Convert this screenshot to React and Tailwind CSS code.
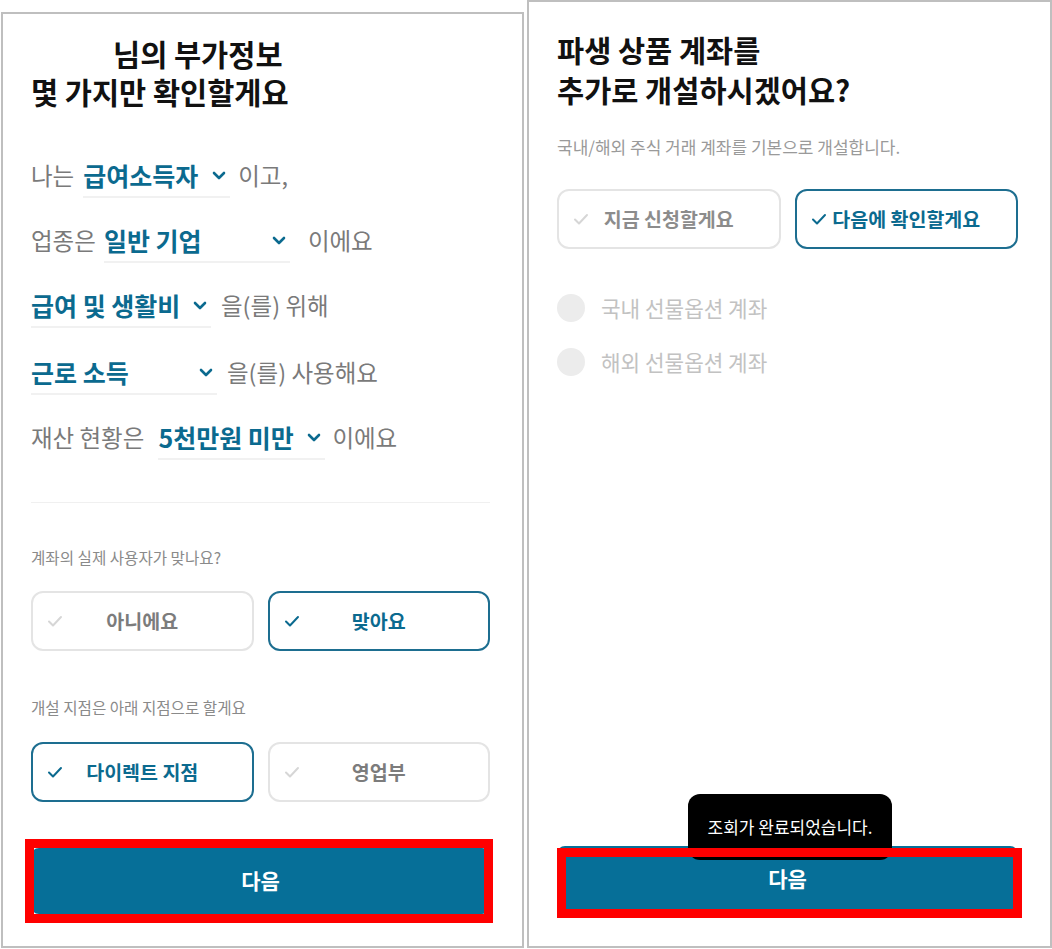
import React from "react";

const FONT = { fontFamily: '"Noto Sans CJK KR", "Noto Sans", sans-serif' };

function Chevron() {
  return (
    <svg width="14" height="9" viewBox="0 0 14 9" fill="none">
      <path d="M2 2l5 5 5-5" stroke="#0b6a8f" strokeWidth="2.6" strokeLinecap="round" strokeLinejoin="round" />
    </svg>
  );
}

function Check({ active }) {
  return (
    <svg width="16" height="12" viewBox="0 0 16 12" fill="none">
      <path
        d="M2 6.5l4 4L14 2"
        stroke={active ? "#0b6a8f" : "#d6d6d6"}
        strokeWidth="2"
        strokeLinecap="round"
        strokeLinejoin="round"
      />
    </svg>
  );
}

function Select({ value, cls }) {
  return (
    <div className={`box-content flex h-[30px] items-center justify-between border-b-2 border-[#f1f1f1] pb-[6px] pr-[4px] ${cls}`}>
      <span className="whitespace-nowrap text-[25px] font-bold leading-[30px] text-[#0b6a8f]">{value}</span>
      <Chevron />
    </div>
  );
}

function Label({ children, cls = "" }) {
  return <span className={`whitespace-nowrap text-[23.5px] leading-[30px] text-[#7a7a7a] ${cls}`}>{children}</span>;
}

function Choice({ label, active, textCls = "" }) {
  return (
    <div
      className={`relative flex h-[60px] items-center justify-center rounded-[12px] border-2 ${
        active ? "border-[#1d6e90]" : "border-[#e4e4e4]"
      }`}
    >
      <span className="absolute left-[14px] top-[22px]">
        <Check active={active} />
      </span>
      <span className={`text-[19.5px] font-bold ${active ? "text-[#0b6a8f]" : "text-[#7c7c7c]"} ${textCls}`}>{label}</span>
    </div>
  );
}

function NextButton({ frameCls, children }) {
  return (
    <div className="relative h-[66px] rounded-[8px] bg-[#066f98]">
      <div className="flex h-full items-center justify-center text-[21px] font-bold text-white">다음</div>
      {children}
      <div className={`pointer-events-none absolute border-[9px] border-[#ff0000] ${frameCls}`} />
    </div>
  );
}

function Radio({ label, cls = "" }) {
  return (
    <div className={`flex h-[28px] items-center gap-[16px] ${cls}`}>
      <span className="h-[28px] w-[28px] rounded-full bg-[#ececec]" />
      <span className="text-[21.3px] leading-[28px] text-[#c2c2c2]">{label}</span>
    </div>
  );
}

export default function App() {
  return (
    <div className="flex h-[949px] w-[1052px] bg-white" style={FONT}>
      {/* Left panel */}
      <div className="relative ml-[1px] mt-[12px] flex h-[936px] w-[523px] flex-col border-2 border-[#bfbfbf] pl-[28px] pr-[32px] pt-[20px]">
        <h1 className="text-[29.5px] font-bold leading-[38px] text-[#111]">
          <div>
            <span className="inline-block w-[82px]" />님의 부가정보
          </div>
          <div>몇 가지만 확인할게요</div>
        </h1>

        <div className="mt-[50px] flex flex-col">
          <div className="flex items-start">
            <Label>나는</Label>
            <Select value="급여소득자" cls="ml-[9px] w-[143px]" />
            <Label cls="ml-[8px]">이고,</Label>
          </div>
          <div className="mt-[27px] flex items-start">
            <Label>업종은</Label>
            <Select value="일반 기업" cls="ml-[8px] w-[182px]" />
            <Label cls="ml-[18px]">이에요</Label>
          </div>
          <div className="mt-[27px] flex items-start">
            <Select value="급여 및 생활비" cls="w-[176px]" />
            <Label cls="ml-[10px]">을(를) 위해</Label>
          </div>
          <div className="mt-[29px] flex items-start">
            <Select value="근로 소득" cls="w-[182px]" />
            <Label cls="ml-[10px]">을(를) 사용해요</Label>
          </div>
          <div className="mt-[27px] flex items-start">
            <Label>재산 현황은</Label>
            <Select value="5천만원 미만" cls="ml-[14px] w-[163px]" />
            <Label cls="ml-[7px]">이에요</Label>
          </div>
        </div>

        <div className="mt-[42px] h-px bg-[#f0f0f0]" />

        <p className="mt-[43px] text-[15.6px] leading-[22px] text-[#8a8a8a]">계좌의 실제 사용자가 맞나요?</p>
        <div className="mt-[23px] grid grid-cols-2 gap-[14px]">
          <Choice label="아니에요" />
          <Choice label="맞아요" active />
        </div>

        <p className="mt-[45px] text-[15.6px] leading-[22px] text-[#8a8a8a]">개설 지점은 아래 지점으로 할게요</p>
        <div className="mt-[24px] grid grid-cols-2 gap-[14px]">
          <Choice label="다이렉트 지점" active />
          <Choice label="영업부" />
        </div>

        <div className="mt-[46px]">
          <NextButton frameCls="-left-[6px] -right-[3px] -top-[9px] -bottom-[9px]" />
        </div>
      </div>

      {/* Right panel */}
      <div className="relative ml-[3px] flex h-[948px] w-[525px] flex-col border-2 border-[#bfbfbf] pl-[28px] pr-[32px] pt-[27px]">
        <h1 className="text-[29.5px] font-bold leading-[40px] text-[#111]">
          <div>파생 상품 계좌를</div>
          <div>추가로 개설하시겠어요?</div>
        </h1>
        <p className="mt-[27px] text-[17px] leading-[22px] text-[#9a9a9a]">국내/해외 주식 거래 계좌를 기본으로 개설합니다.</p>

        <div className="mt-[31px] grid grid-cols-2 gap-[14px]">
          <Choice label="지금 신청할게요" textCls="text-[#8c8c8c]" />
          <Choice label="다음에 확인할게요" active />
        </div>

        <Radio label="국내 선물옵션 계좌" cls="mt-[45px]" />
        <Radio label="해외 선물옵션 계좌" cls="mt-[26px]" />

        <div className="mb-[34px] mt-auto">
          <NextButton frameCls="left-0 -right-[4px] top-[2px] -bottom-[6px]">
            <div className="absolute left-[131px] top-[-52px] flex h-[66px] w-[204px] items-center justify-center rounded-[12px] bg-black text-[17px] text-white">
              조회가 완료되었습니다.
            </div>
          </NextButton>
        </div>
      </div>
    </div>
  );
}
